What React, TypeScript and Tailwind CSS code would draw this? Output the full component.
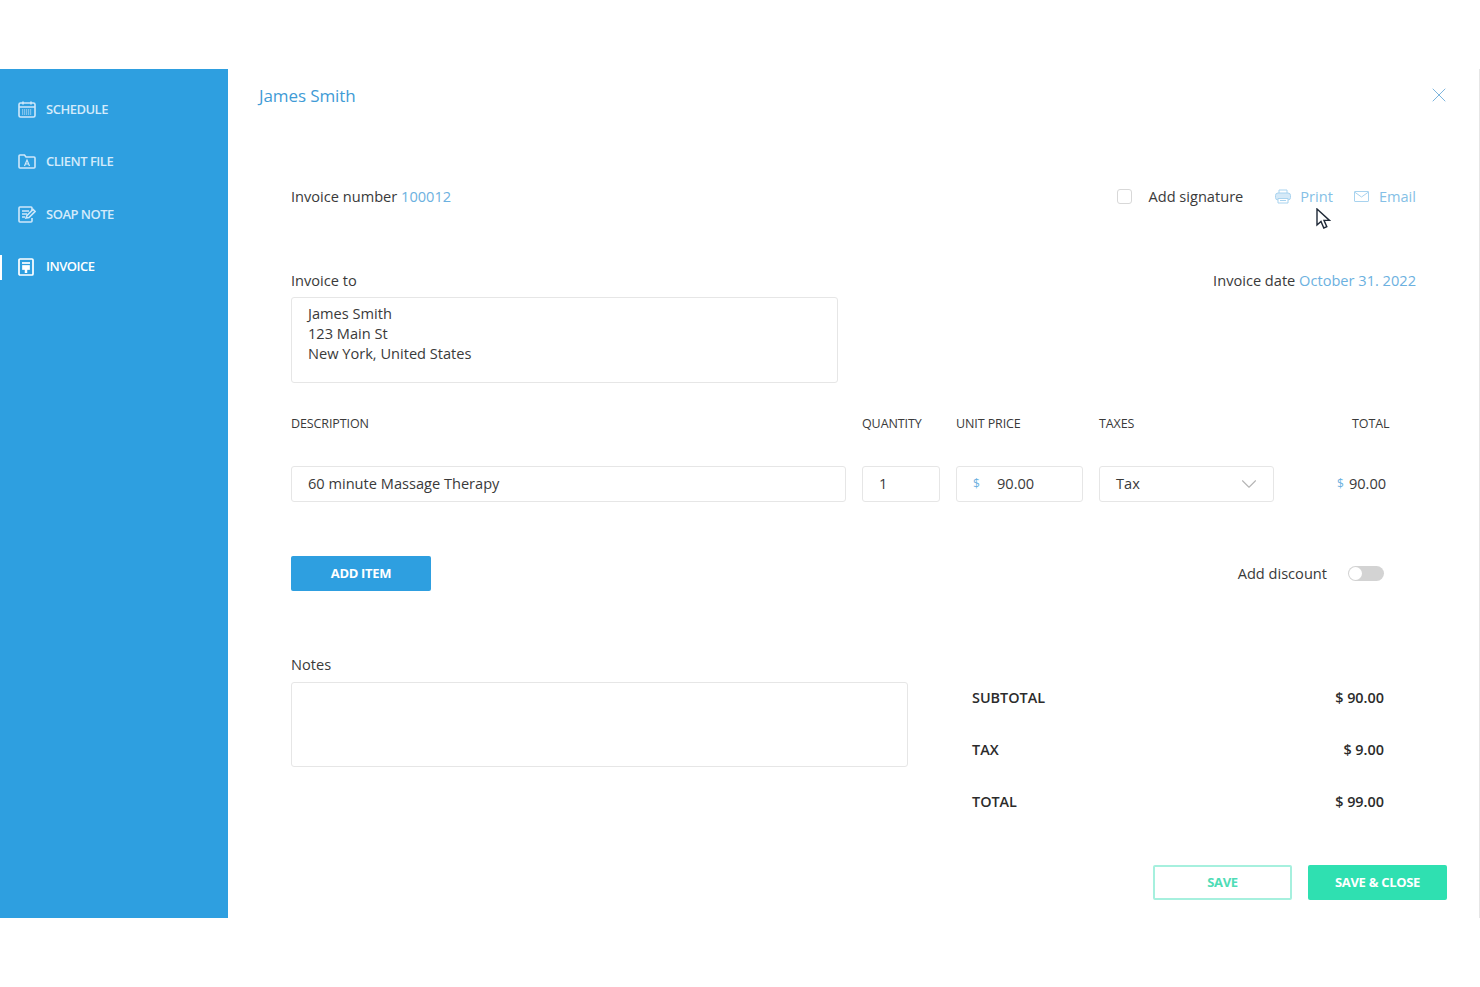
import React from 'react';
import { X, ChevronDown } from 'lucide-react';

const CalendarIcon = () => (
  <svg width="18" height="17" viewBox="0 0 18 17" fill="none" stroke="#cfe8fa" strokeWidth="1.6">
    <rect x="1" y="2" width="16" height="14" rx="1.5" />
    <path d="M1 6h16M5 0.5v3M13 0.5v3" />
    <path d="M4 9h10M4 11h10M4 13h10" strokeDasharray="1.2 0.8" strokeWidth="1.2" />
  </svg>
);

const FolderIcon = () => (
  <svg width="18" height="15" viewBox="0 0 18 15" fill="none" stroke="#cfe8fa" strokeWidth="1.6">
    <path d="M1 3V13a1 1 0 0 0 1 1h14a1 1 0 0 0 1-1V4a1 1 0 0 0-1-1H8L6.500 1H2a1 1 0 0 0-1 1z" />
    <path d="M6.500 12L9 6l2.500 6M7.500 10h3" strokeWidth="1.2" />
  </svg>
);

const NoteIcon = () => (
  <svg width="18" height="17" viewBox="0 0 18 17" fill="none" stroke="#cfe8fa" strokeWidth="1.6">
    <path d="M14 5V2a1 1 0 0 0-1-1H2a1 1 0 0 0-1 1v13a1 1 0 0 0 1 1h11a1 1 0 0 0 1-1v-3" />
    <path d="M4 5h7M4 8h5M4 11h3" />
    <path d="M8 12l1-2.500 6-6 2 2-6 6z" />
  </svg>
);

const InvoiceIcon = () => (
  <svg width="16" height="18" viewBox="0 0 16 18" fill="none" stroke="#ffffff" strokeWidth="1.7">
    <rect x="1" y="1" width="14" height="16" rx="1" />
    <path d="M4 5h8" />
    <rect x="5" y="8" width="6" height="3" fill="#ffffff" />
    <path d="M8 11v4" strokeWidth="2.500" />
  </svg>
);

const PrinterIcon = () => (
  <svg width="16" height="15" viewBox="0 0 16 15" fill="none" stroke="#a8d3ef" strokeWidth="1">
    <path d="M4 4V1h8v3" />
    <rect x="0.500" y="4" width="15" height="7" rx="2.500" fill="#d5e9f7" />
    <path d="M3 9.500h10V14H3z" fill="#ffffff" />
    <path d="M5 11.500h6" />
  </svg>
);

const MailIcon = () => (
  <svg width="15" height="11" viewBox="0 0 15 11" fill="none" stroke="#a8d3ef" strokeWidth="1">
    <rect x="0.500" y="0.500" width="14" height="10" rx="0.500" />
    <path d="M0.500 1l7 5 7-5" />
  </svg>
);

const Cursor = () => (
  <svg width="15" height="22" viewBox="0 0 15 22" className="absolute left-[1316px] top-[208px]">
    <path d="M1 1v16l4-3.500 2.800 6.500 3-1.300-2.800-6.300h5.500z" fill="#ffffff" stroke="#1f2937" strokeWidth="1.400" />
  </svg>
);

const NAV = [
  { label: 'SCHEDULE', icon: <CalendarIcon /> },
  { label: 'CLIENT FILE', icon: <FolderIcon /> },
  { label: 'SOAP NOTE', icon: <NoteIcon /> },
  { label: 'INVOICE', icon: <InvoiceIcon />, active: true },
];

const Sidebar = () => (
  <aside className="w-[228px] shrink-0 bg-[#2e9fe0] pt-[14px] flex flex-col">
    {NAV.map((item) => (
      <div key={item.label} className="relative h-[52.500px] flex items-center pl-[18px]">
        {item.active && <div className="absolute left-0 top-[14px] h-[25px] w-[2px] bg-white" />}
        <span className="w-[28px] flex items-center">{item.icon}</span>
        <span
          className={`text-[13px] tracking-[-0.5px] font-semibold ${
            item.active ? 'text-white' : 'text-[#d4ebfb]'
          }`}
        >
          {item.label}
        </span>
      </div>
    ))}
  </aside>
);

const fieldClass =
  'h-[36px] border border-[#e6e6e6] rounded-[3px] flex items-center text-[14.6px] text-[#3a3a3a] bg-white';

const SummaryRow = ({ label, value }: { label: string; value: string }) => (
  <div className="h-[52px] flex items-center justify-between text-[14.4px] font-semibold text-[#2b2b2b]">
    <span>{label}</span>
    <span>{value}</span>
  </div>
);

export default function App() {
  return (
    <div className="relative w-[1480px] h-[987px] bg-white overflow-hidden font-['Open_Sans',sans-serif] pt-[69px]">
      <div className="flex h-[849px]">
        <Sidebar />
        <main className="flex-1 flex flex-col relative">
          <header className="h-[54px] pl-[31px] pr-[29px] flex items-center justify-between">
            <h1 className="text-[17px] text-[#3f9bd6] tracking-[-0.1px]">James Smith</h1>
            <X size={24} strokeWidth={1} className="text-[#7db5dd] -mt-[2px]" />
          </header>

          <div className="pl-[63px] pr-[64px] flex flex-col">
            <div className="mt-[60px] h-[28px] flex items-center justify-between text-[14.6px] text-[#3a3a3a]">
              <div>
                Invoice number <span className="text-[#6cb1e0]">100012</span>
              </div>
              <div className="flex items-center">
                <span className="w-[15px] h-[15px] border border-[#d8d8d8] rounded-[3px]" />
                <span className="ml-[16px]">Add signature</span>
                <span className="ml-[32px] mr-[9px]">
                  <PrinterIcon />
                </span>
                <span className="text-[#85bfe6]">Print</span>
                <span className="ml-[21px] mr-[10px]">
                  <MailIcon />
                </span>
                <span className="text-[#85bfe6]">Email</span>
              </div>
            </div>

            <div className="mt-[56px] h-[28px] flex items-center justify-between text-[14.6px] text-[#3a3a3a]">
              <span>Invoice to</span>
              <span>
                Invoice date <span className="text-[#6cb1e0]">October 31. 2022</span>
              </span>
            </div>
            <div className="mt-[2px] w-[547px] h-[86px] border border-[#e6e6e6] rounded-[3px] px-[16px] pt-[5px] text-[14.6px] leading-[20px] text-[#3a3a3a]">
              <div>James Smith</div>
              <div>123 Main St</div>
              <div>New York, United States</div>
            </div>

            <div className="mt-[31px] h-[20px] flex items-center text-[12.5px] tracking-[-0.1px] text-[#3a3a3a]">
              <span className="w-[571px]">DESCRIPTION</span>
              <span className="w-[94px]">QUANTITY</span>
              <span className="w-[143px]">UNIT PRICE</span>
              <span className="w-[253px]">TAXES</span>
              <span>TOTAL</span>
            </div>

            <div className="mt-[32px] flex items-center">
              <div className={`${fieldClass} w-[555px] pl-[16px]`}>60 minute Massage Therapy</div>
              <div className={`${fieldClass} ml-[16px] w-[78px] pl-[16px]`}>1</div>
              <div className={`${fieldClass} ml-[16px] w-[127px] pl-[16px]`}>
                <span className="text-[12px] text-[#6cb1e0] w-[24px]">$</span>90.00
              </div>
              <div className={`${fieldClass} ml-[16px] w-[175px] pl-[16px] pr-[11px] justify-between`}>
                Tax
                <ChevronDown size={26} strokeWidth={1} className="text-[#b5b5b5]" />
              </div>
              <div className="ml-[63px] flex items-center text-[14.6px] text-[#3a3a3a]">
                <span className="text-[12px] text-[#6cb1e0] mr-[5px]">$</span>90.00
              </div>
            </div>

            <div className="mt-[54px] flex items-center justify-between">
              <button className="w-[140px] h-[35px] rounded-[2px] bg-[#2e9fe0] text-white text-[13px] font-bold tracking-[-0.3px]">
                ADD ITEM
              </button>
              <div className="flex items-center mr-[32px] text-[14.6px] text-[#3a3a3a]">
                Add discount
                <span className="ml-[21px] w-[36px] h-[15px] rounded-full bg-[#d3d3d3] flex items-center pl-[1px]">
                  <span className="w-[13px] h-[13px] rounded-full bg-white" />
                </span>
              </div>
            </div>

            <div className="mt-[60px] h-[28px] flex items-center text-[14.6px] text-[#3a3a3a]">Notes</div>
            <div className="flex items-start">
              <div className="mt-[3px] w-[617px] h-[85px] border border-[#e6e6e6] rounded-[3px]" />
              <div className="ml-[64px] -mt-[7px] w-[412px]">
                <SummaryRow label="SUBTOTAL" value="$ 90.00" />
                <SummaryRow label="TAX" value="$ 9.00" />
                <SummaryRow label="TOTAL" value="$ 99.00" />
              </div>
            </div>
          </div>

          <div className="mt-auto mb-[18px] pr-[33px] flex justify-end gap-[16px]">
            <button className="w-[139px] h-[35px] rounded-[2px] border-2 border-[#a6f0de] text-[#4fdcb6] text-[13px] font-bold tracking-[-0.3px]">
              SAVE
            </button>
            <button className="w-[139px] h-[35px] rounded-[2px] bg-[#2fe0b1] text-white text-[13px] font-bold tracking-[-0.3px]">
              SAVE &amp; CLOSE
            </button>
          </div>
        </main>
      </div>
      <div className="absolute right-0 top-[69px] h-[849px] w-[1px] bg-[#e6e6e6]" />
      <Cursor />
    </div>
  );
}
